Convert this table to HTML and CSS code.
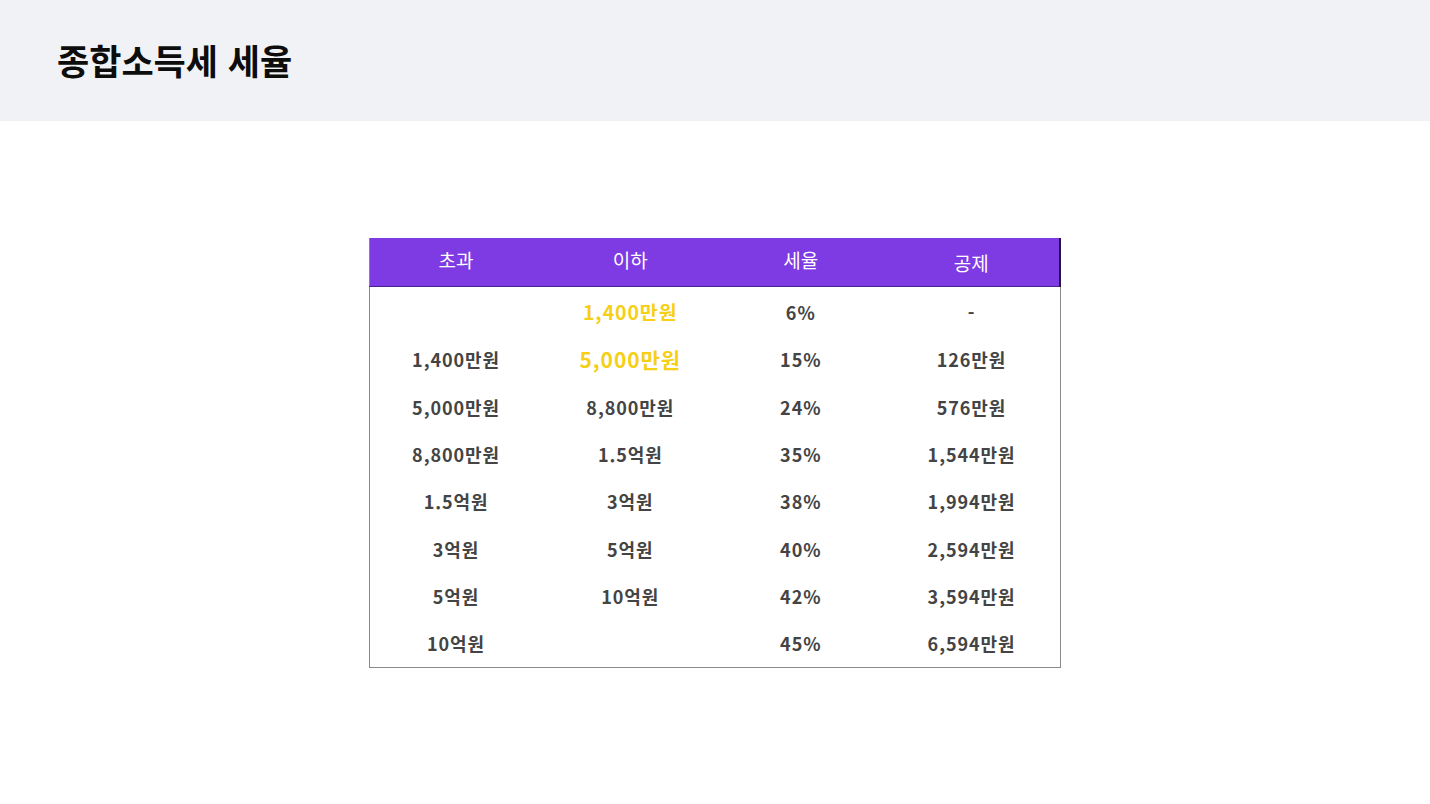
FILE: index.html
```html
<!DOCTYPE html>
<html lang="ko">
    <head>
        <meta charset="utf-8">
        <title>종합소득세 세율</title>
        <link rel="stylesheet" href="styles.css">
    </head>
    <body>
        <header class="page-head">
            <h1>종합소득세 세율</h1>
        </header>

        <main>
            <table class="rates">
                <colgroup>
                    <col class="c1">
                    <col class="c2">
                    <col class="c3">
                    <col class="c4">
                </colgroup>
                <thead>
                    <tr>
                        <th>초과</th>
                        <th>이하</th>
                        <th>세율</th>
                        <th class="last">공제</th>
                    </tr>
                </thead>
                <tbody>
                    <tr>
                        <td></td>
                        <td class="hl">1,400만원</td>
                        <td>6%</td>
                        <td>-</td>
                    </tr>
                    <tr>
                        <td>1,400만원</td>
                        <td class="hl big">5,000만원</td>
                        <td>15%</td>
                        <td>126만원</td>
                    </tr>
                    <tr>
                        <td>5,000만원</td>
                        <td>8,800만원</td>
                        <td>24%</td>
                        <td>576만원</td>
                    </tr>
                    <tr>
                        <td>8,800만원</td>
                        <td>1.5억원</td>
                        <td>35%</td>
                        <td>1,544만원</td>
                    </tr>
                    <tr>
                        <td>1.5억원</td>
                        <td>3억원</td>
                        <td>38%</td>
                        <td>1,994만원</td>
                    </tr>
                    <tr>
                        <td>3억원</td>
                        <td>5억원</td>
                        <td>40%</td>
                        <td>2,594만원</td>
                    </tr>
                    <tr>
                        <td>5억원</td>
                        <td>10억원</td>
                        <td>42%</td>
                        <td>3,594만원</td>
                    </tr>
                    <tr>
                        <td>10억원</td>
                        <td></td>
                        <td>45%</td>
                        <td>6,594만원</td>
                    </tr>
                </tbody>
            </table>
        </main>
    </body>
</html>
```

FILE: styles.css
```css
body {
    margin: 0;
    background: #fff;
    color: #111;
    font-family: "Noto Sans CJK KR", "Noto Sans", sans-serif;
}

.page-head {
    background: #f1f2f5;
    height: 121px;
    padding-left: 57px;
    box-sizing: border-box;
    display: flex;
    align-items: center;
}

.page-head > h1 {
    margin: 0 0 2px;
    font-size: 35px;
    font-weight: 700;
    color: #0d0d0d;
}

main {
    padding-top: 117px;
}

.rates {
    margin: 0 auto;
    width: 691px;
    border-collapse: collapse;
    table-layout: fixed;
    border-left: 1px solid #8a8a8a;
    border-right: 1px solid #8a8a8a;
    border-bottom: 1px solid #8a8a8a;
}

.rates .c1 { width: 173px; }
.rates .c2 { width: 176px; }
.rates .c3 { width: 165px; }
.rates .c4 { width: 177px; }

.rates th {
    background: #7f3be3;
    color: #fff;
    font-size: 19px;
    font-weight: 400;
    line-height: 24px;
    height: 48px;
    padding: 0 0 4px;
    box-sizing: border-box;
    border-bottom: 1px solid #4b2390;
    text-align: center;
}

.rates th.last {
    border-right: 2px solid #241640;
    padding: 2px 0 0;
}

.rates td {
    height: 47.3px;
    padding: 0;
    line-height: 24px;
    text-align: center;
    font-size: 18px;
    font-weight: 700;
    color: #444;
    letter-spacing: 0.9px;
}

.rates tbody tr:first-child td {
    padding-top: 2px;
}

.rates td.hl {
    color: #f6cf16;
    font-size: 19.5px;
}

.rates td.hl.big {
    font-size: 21px;
}
```
